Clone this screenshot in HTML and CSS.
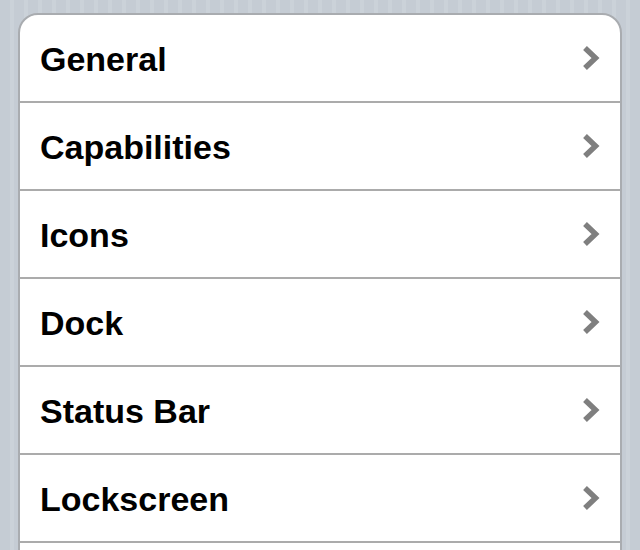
FILE: index.html
```html
<!DOCTYPE html>
<html>
<head>
<meta charset="utf-8">
<link rel="stylesheet" href="styles.css">
</head>
<body>
<div class="group">
  <div class="row"><span class="label">General</span><svg class="chev" viewBox="0 0 18 26" width="18" height="26"><polyline points="3,3 13.5,13 3,23"/></svg></div>
  <div class="row"><span class="label">Capabilities</span><svg class="chev" viewBox="0 0 18 26" width="18" height="26"><polyline points="3,3 13.5,13 3,23"/></svg></div>
  <div class="row"><span class="label">Icons</span><svg class="chev" viewBox="0 0 18 26" width="18" height="26"><polyline points="3,3 13.5,13 3,23"/></svg></div>
  <div class="row"><span class="label">Dock</span><svg class="chev" viewBox="0 0 18 26" width="18" height="26"><polyline points="3,3 13.5,13 3,23"/></svg></div>
  <div class="row"><span class="label">Status Bar</span><svg class="chev" viewBox="0 0 18 26" width="18" height="26"><polyline points="3,3 13.5,13 3,23"/></svg></div>
  <div class="row"><span class="label">Lockscreen</span><svg class="chev" viewBox="0 0 18 26" width="18" height="26"><polyline points="3,3 13.5,13 3,23"/></svg></div>
  <div class="row"></div>
</div>
</body>
</html>
```
FILE: styles.css
```css
html, body {
  margin: 0;
  padding: 0;
  height: 100%;
  overflow: hidden;
}
body {
  background: repeating-linear-gradient(90deg, #c5ccd4 0 10px, #cbd2d9 10px 14px);
  font-family: "Liberation Sans", Arial, sans-serif;
}
.group {
  margin: 13px 0 0 18px;
  width: 600px;
  border: 2px solid #a9acb0;
  border-radius: 20px;
  background: #fff;
  overflow: hidden;
}
.row {
  height: 86px;
  border-bottom: 2px solid #ababab;
  display: flex;
  align-items: center;
  justify-content: space-between;
  padding: 0 20px 0 20px;
}
.label {
  font-size: 34px;
  font-weight: bold;
  color: #000;
  padding-top: 2px;
}
.chev {
  display: block;
}
.chev polyline {
  fill: none;
  stroke: #7f7f7f;
  stroke-width: 5.5;
  stroke-linejoin: miter;
  stroke-linecap: butt;
}
```
